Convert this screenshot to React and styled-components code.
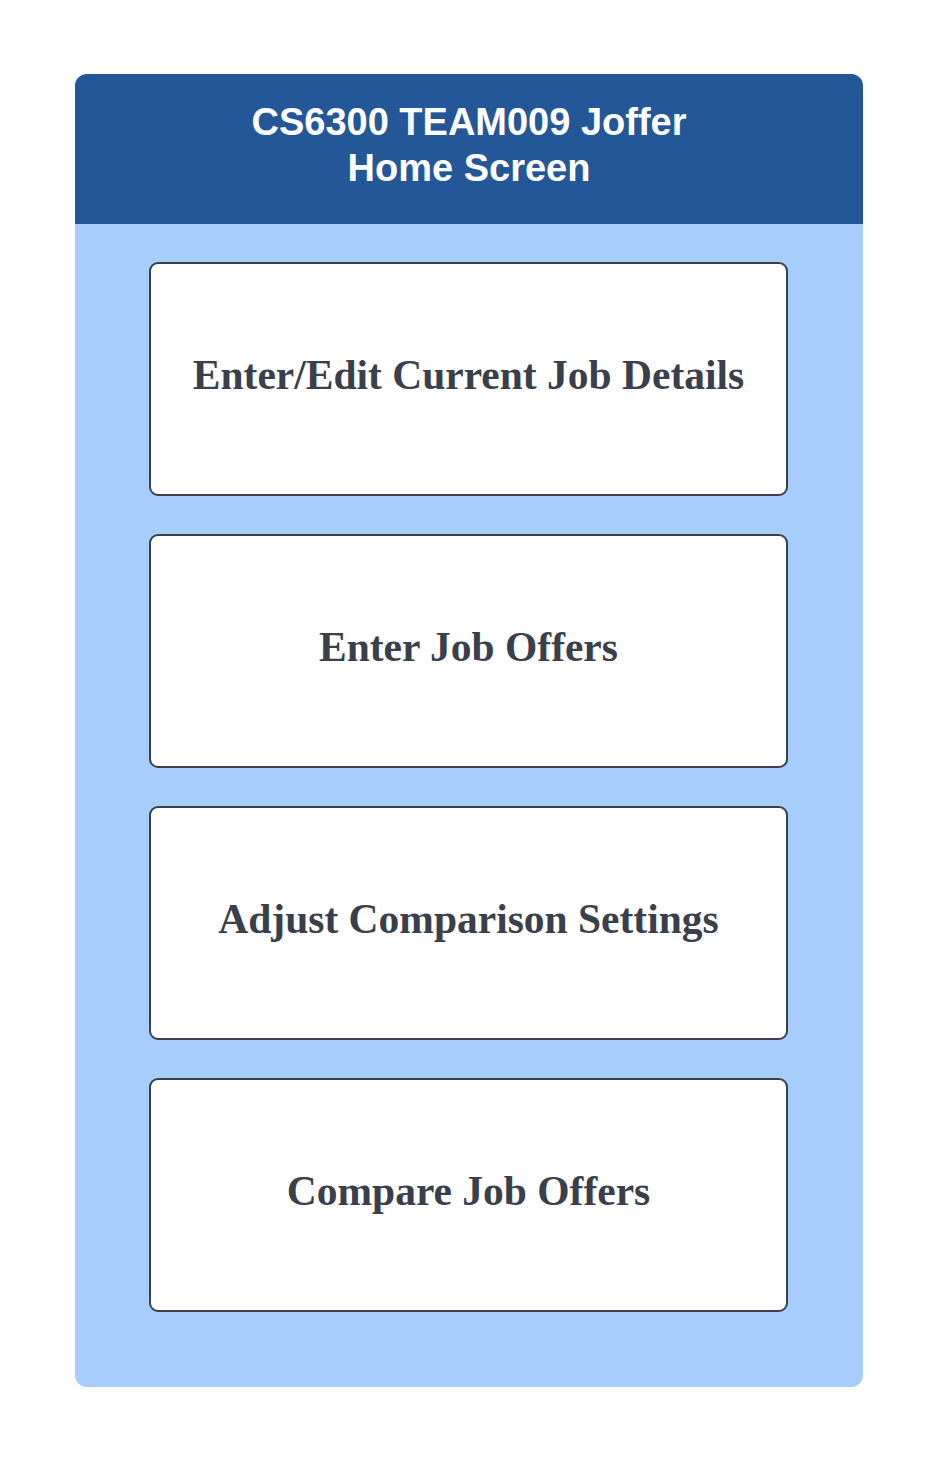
import React from "react";
import styled, { createGlobalStyle } from "styled-components";

const Global = createGlobalStyle`
  html, body { margin: 0; padding: 0; background: #ffffff; }
  body { width: 939px; height: 1463px; }
`;

const Page = styled.div`
  padding: 74px 76px 76px 75px;
  box-sizing: border-box;
  width: 939px;
`;

const Card = styled.div`
  width: 788px;
  border-radius: 12px;
  overflow: hidden;
  background: #a6cdfc;
  display: flex;
  flex-direction: column;
`;

const Header = styled.div`
  height: 150px;
  box-sizing: border-box;
  padding-bottom: 9px;
  background: #235797;
  color: #ffffff;
  display: flex;
  align-items: center;
  justify-content: center;
  text-align: center;
  font-family: "Liberation Sans", Arial, sans-serif;
  font-weight: 700;
  font-size: 38px;
  line-height: 46px;
`;

const Body = styled.div`
  display: flex;
  flex-direction: column;
  gap: 38px;
  padding: 38px 75px 75px 74px;
`;

const Button = styled.div`
  height: 234px;
  box-sizing: border-box;
  background: #ffffff;
  border: 2px solid #3a3f4a;
  border-radius: 9px;
  display: flex;
  align-items: center;
  justify-content: center;
  font-family: "Liberation Serif", "Times New Roman", serif;
  font-weight: 700;
  font-size: 41.5px;
  color: #3a404b;
  padding-bottom: 8px;
`;

const items = [
  "Enter/Edit Current Job Details",
  "Enter Job Offers",
  "Adjust Comparison Settings",
  "Compare Job Offers",
];

export default function App() {
  return (
    <>
      <Global />
      <Page>
        <Card>
          <Header>
            CS6300 TEAM009 Joffer
            <br />
            Home Screen
          </Header>
          <Body>
            {items.map((t) => (
              <Button key={t}>{t}</Button>
            ))}
          </Body>
        </Card>
      </Page>
    </>
  );
}
